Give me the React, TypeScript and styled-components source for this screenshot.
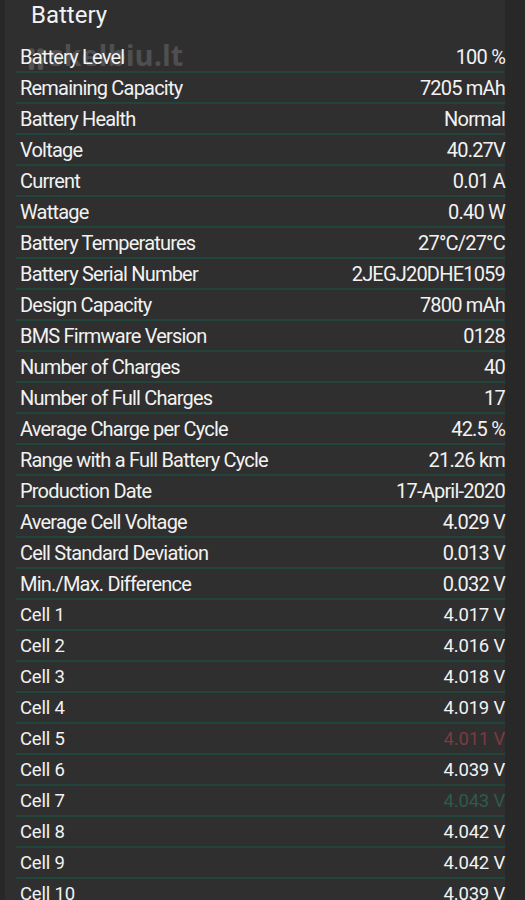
import styled, { createGlobalStyle } from "styled-components";

type Row = { label: string; value: string; tone?: "low" | "high" };

const rows: Row[] = [
  { label: "Battery Level", value: "100 %" },
  { label: "Remaining Capacity", value: "7205 mAh" },
  { label: "Battery Health", value: "Normal" },
  { label: "Voltage", value: "40.27V" },
  { label: "Current", value: "0.01 A" },
  { label: "Wattage", value: "0.40 W" },
  { label: "Battery Temperatures", value: "27°C/27°C" },
  { label: "Battery Serial Number", value: "2JEGJ20DHE1059" },
  { label: "Design Capacity", value: "7800 mAh" },
  { label: "BMS Firmware Version", value: "0128" },
  { label: "Number of Charges", value: "40" },
  { label: "Number of Full Charges", value: "17" },
  { label: "Average Charge per Cycle", value: "42.5 %" },
  { label: "Range with a Full Battery Cycle", value: "21.26 km" },
  { label: "Production Date", value: "17-April-2020" },
  { label: "Average Cell Voltage", value: "4.029 V" },
  { label: "Cell Standard Deviation", value: "0.013 V" },
  { label: "Min./Max. Difference", value: "0.032 V" },
];

const cells: Row[] = [
  { label: "Cell 1", value: "4.017 V" },
  { label: "Cell 2", value: "4.016 V" },
  { label: "Cell 3", value: "4.018 V" },
  { label: "Cell 4", value: "4.019 V" },
  { label: "Cell 5", value: "4.011 V", tone: "low" },
  { label: "Cell 6", value: "4.039 V" },
  { label: "Cell 7", value: "4.043 V", tone: "high" },
  { label: "Cell 8", value: "4.042 V" },
  { label: "Cell 9", value: "4.042 V" },
  { label: "Cell 10", value: "4.039 V" },
];

const GlobalStyle = createGlobalStyle`
  html, body {
    margin: 0;
    background: #282828;
    height: 900px;
    overflow: hidden;
  }
  body {
    font-family: Roboto, "Noto Sans", sans-serif;
    color: #f2f2f2;
  }
`;

function App() {
  return (
    <>
      <GlobalStyle />
      <Screen>
        <Panel>
          <Title>Battery</Title>
          <List>
            {rows.map((r) => (
              <InfoRow key={r.label}>
                <Label>{r.label}</Label>
                <Value>{r.value}</Value>
              </InfoRow>
            ))}
            {cells.map((r) => (
              <InfoRow key={r.label} $small>
                <Label>{r.label}</Label>
                <Value $tone={r.tone}>{r.value}</Value>
              </InfoRow>
            ))}
          </List>
          <Watermark>
            <svg width="16" height="22" viewBox="0 0 16 22">
              <circle cx="3.5" cy="3.5" r="3.3" fill="currentColor" />
              <circle cx="12.5" cy="3.5" r="3.3" fill="currentColor" />
              <rect x="0.8" y="9" width="5.4" height="13" rx="2" fill="currentColor" />
              <rect x="9.8" y="9" width="5.4" height="13" rx="2" fill="currentColor" />
            </svg>
            skelbiu.lt
          </Watermark>
        </Panel>
      </Screen>
    </>
  );
}

const Screen = styled.div`
  height: 900px;
  padding: 0 20px 0 5px;
  background: #282828;
  overflow: hidden;
`;

const Panel = styled.div`
  position: relative;
  background: #2f2f2f;
  height: 900px;
  padding-left: 11px;
`;

const Title = styled.div`
  height: 32px;
  padding: 1px 0 0 15px;
  font-size: 24px;
  line-height: 28px;
  box-sizing: border-box;
`;

const List = styled.div`
  display: flex;
  flex-direction: column;
  padding-top: 10px;
`;

const InfoRow = styled.div<{ $small?: boolean }>`
  display: flex;
  justify-content: space-between;
  align-items: center;
  height: 31px;
  box-sizing: border-box;
  border-bottom: 2px solid #21443b;
  padding: 0 0 0 4px;
  font-size: ${(p) => (p.$small ? "18.5px" : "20px")};
  letter-spacing: ${(p) => (p.$small ? "-0.2px" : "-0.8px")};
`;

const Label = styled.span`
  white-space: nowrap;
`;

const Value = styled.span<{ $tone?: "low" | "high" }>`
  white-space: nowrap;
  color: ${(p) =>
    p.$tone === "low" ? "#7a3b41" : p.$tone === "high" ? "#2e5b4b" : "#f2f2f2"};
`;

const Watermark = styled.div`
  position: absolute;
  left: 23px;
  top: 40px;
  display: flex;
  align-items: flex-end;
  gap: 5px;
  font-family: "Open Sans", sans-serif;
  font-weight: 700;
  font-size: 29px;
  line-height: 30px;
  color: rgba(255, 255, 255, 0.17);
  pointer-events: none;
`;

export default App;
